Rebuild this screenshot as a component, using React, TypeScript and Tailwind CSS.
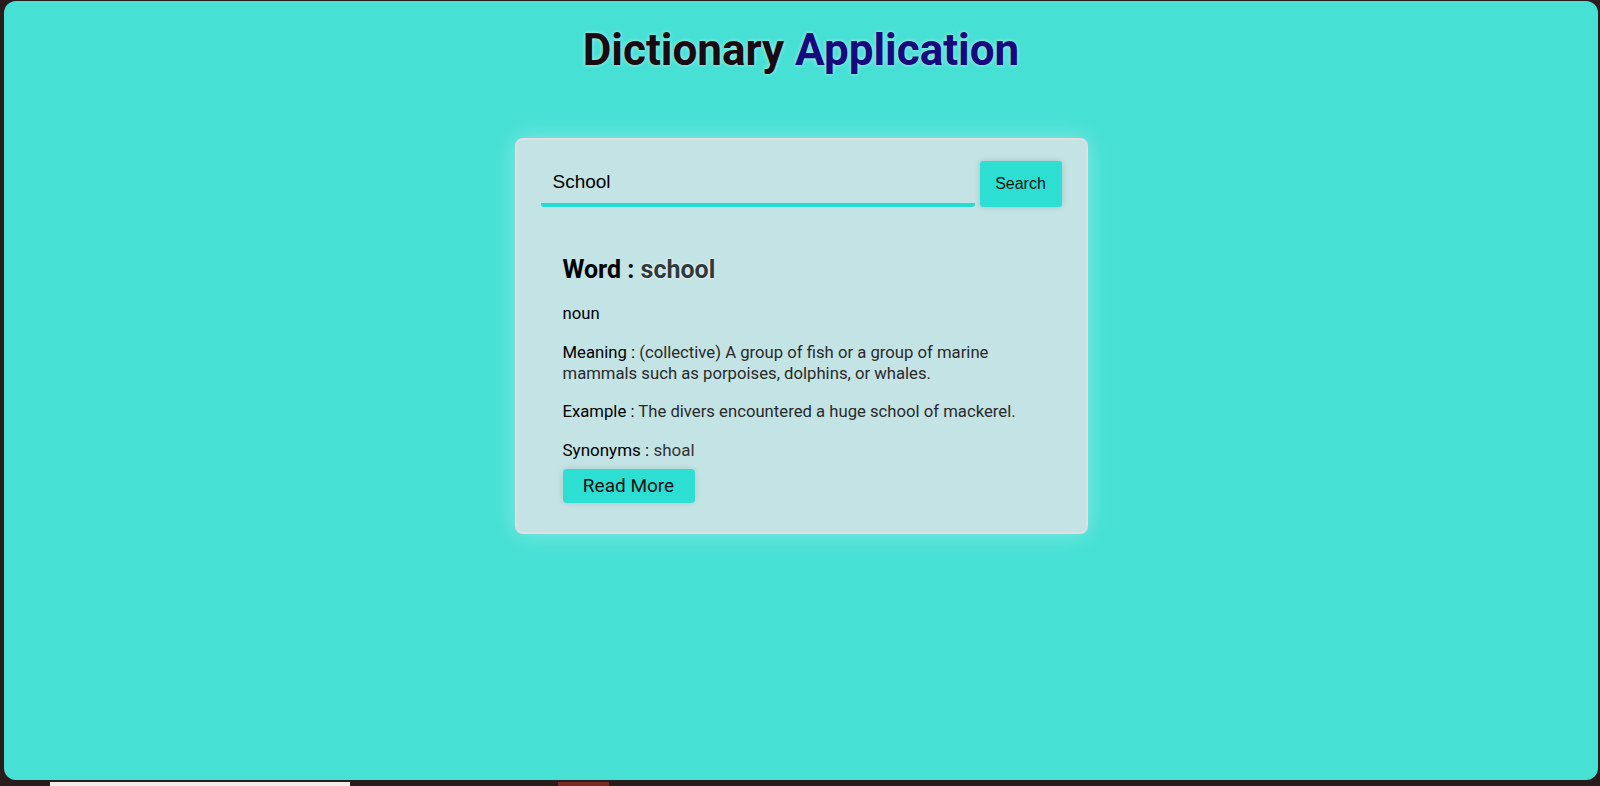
export default function App() {
  return (
    <div className="h-[786px] w-[1600px] bg-[#2a1c1c] flex flex-col overflow-hidden">
      <div className="ml-[4px] mr-[2px] mt-[1px] h-[779px] rounded-[12px] bg-[#46e0d5] flex flex-col items-center">
        <h1
          className="mt-[22px] text-[44px] font-bold leading-[54px] [text-shadow:0_0_4px_rgba(255,255,255,0.6)]"
          style={{ fontFamily: "Roboto, sans-serif" }}
        >
          <span className="text-[#1a0b12]">Dictionary</span>{" "}
          <span className="text-[#170a7c]">Application</span>
        </h1>

        <div className="mt-[61px] w-[573px] rounded-[8px] border-2 border-[#e8dce3] bg-[#c3e3e5] shadow-[0_0_24px_rgba(255,255,255,0.35)] px-[24px] pt-[21px] pb-[29px]">
          <div className="flex items-start gap-[5px]">
            <div className="flex-1 h-[46px] border-b-[4px] border-[#22ddd0] rounded-b-[3px] flex items-center px-[12px]">
              <span className="text-[19px] text-black" style={{ fontFamily: "'Liberation Sans', Arial, sans-serif" }}>
                School
              </span>
            </div>
            <button
              className="w-[82px] h-[46px] rounded-[3px] bg-[#2ddfd2] text-[16px] text-[#111] shadow-[0_0_6px_rgba(0,0,0,0.15)]"
              style={{ fontFamily: "'Liberation Sans', Arial, sans-serif" }}
            >
              Search
            </button>
          </div>

          <div className="px-[22px] pt-[48px] text-[#222]" style={{ fontFamily: "Roboto, sans-serif" }}>
            <h2 className="text-[25px] font-bold leading-[30px] text-black">
              Word : <span className="text-[#2f3a3c] [text-shadow:0_0_3px_rgba(255,255,255,0.9)]">school</span>
            </h2>
            <p className="mt-[19px] text-[16.7px] leading-[20px] text-black">noun</p>
            <p className="mt-[19px] text-[16.7px] leading-[20.5px] text-[#2a2a2a]">
              <span className="text-black">Meaning :</span> (collective) A group of fish or a group of marine mammals such as porpoises, dolphins, or whales.
            </p>
            <p className="mt-[18px] text-[16.7px] leading-[20px] text-[#2a2a2a]">
              <span className="text-black">Example :</span> The divers encountered a huge school of mackerel.
            </p>
            <p className="mt-[18px] text-[17px] leading-[20px] text-[#333]">
              <span className="text-black">Synonyms :</span> shoal
            </p>
            <button className="mt-[9px] w-[132px] h-[34px] rounded-[4px] bg-[#2ddfd2] text-[19px] text-[#111] shadow-[0_0_6px_rgba(0,0,0,0.12)]">
              Read More
            </button>
          </div>
        </div>
      </div>
      <div className="flex mt-[2px] h-[4px]">
        <div className="ml-[50px] w-[300px] bg-[#f4ece8]" />
        <div className="ml-[208px] w-[51px] bg-[#7a2a22]" />
      </div>
    </div>
  );
}
